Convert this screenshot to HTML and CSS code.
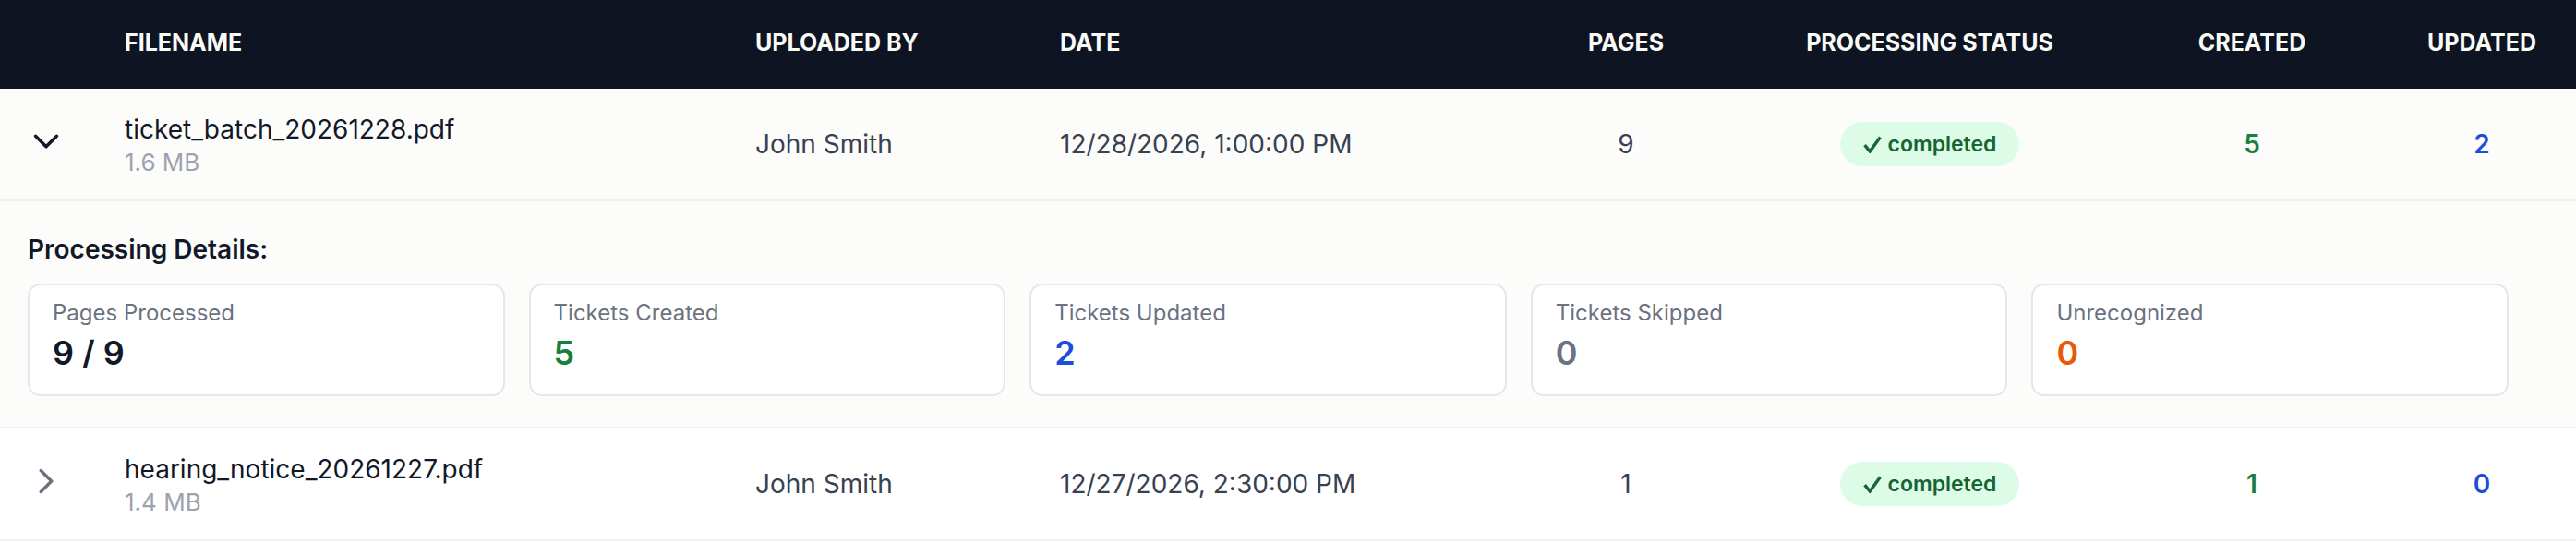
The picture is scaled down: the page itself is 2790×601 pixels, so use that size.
FILE: index.html
```html
<!DOCTYPE html>
<html lang="en">
<head>
<meta charset="utf-8">
<title>Uploads</title>
<link rel="stylesheet" href="styles.css">
</head>
<body>
<div class="table">
  <div class="row head">
    <div class="cell"></div>
    <div class="cell left">Filename</div>
    <div class="cell left">Uploaded By</div>
    <div class="cell left">Date</div>
    <div class="cell center">Pages</div>
    <div class="cell center">Processing Status</div>
    <div class="cell center">Created</div>
    <div class="cell center">Updated</div>
  </div>

  <div class="row body expanded">
    <div class="cell toggle">
      <svg class="chev dark" viewBox="0 0 24 24" width="46" height="46"><path d="m6 9 6 6 6-6"/></svg>
    </div>
    <div class="cell file">
      <div class="fname">ticket_batch_20261228.pdf</div>
      <div class="fsize">1.6 MB</div>
    </div>
    <div class="cell left muted">John Smith</div>
    <div class="cell left muted">12/28/2026, 1:00:00 PM</div>
    <div class="cell center muted">9</div>
    <div class="cell center"><span class="badge"><svg class="check" viewBox="0 0 20 19" width="20" height="19"><path d="M1.6 10.2 L7.2 17 L18.4 1.6"/></svg>completed</span></div>
    <div class="cell center num green">5</div>
    <div class="cell center num blue">2</div>
  </div>

  <div class="details">
    <div class="details-title">Processing Details:</div>
    <div class="cards">
      <div class="card"><div class="label">Pages Processed</div><div class="value">9 / 9</div></div>
      <div class="card"><div class="label">Tickets Created</div><div class="value green">5</div></div>
      <div class="card"><div class="label">Tickets Updated</div><div class="value blue">2</div></div>
      <div class="card"><div class="label">Tickets Skipped</div><div class="value gray">0</div></div>
      <div class="card"><div class="label">Unrecognized</div><div class="value orange">0</div></div>
    </div>
  </div>

  <div class="row body">
    <div class="cell toggle">
      <svg class="chev light" viewBox="0 0 24 24" width="46" height="46"><path d="m9 18 6-6-6-6"/></svg>
    </div>
    <div class="cell file">
      <div class="fname">hearing_notice_20261227.pdf</div>
      <div class="fsize">1.4 MB</div>
    </div>
    <div class="cell left muted">John Smith</div>
    <div class="cell left muted">12/27/2026, 2:30:00 PM</div>
    <div class="cell center muted">1</div>
    <div class="cell center"><span class="badge"><svg class="check" viewBox="0 0 20 19" width="20" height="19"><path d="M1.6 10.2 L7.2 17 L18.4 1.6"/></svg>completed</span></div>
    <div class="cell center num green">1</div>
    <div class="cell center num blue">0</div>
  </div>
</div>
</body>
</html>
```
FILE: styles.css
```css
html, body {
  margin: 0;
  padding: 0;
  background: #ffffff;
}
body {
  font-family: Inter, "Noto Sans", "Liberation Sans", sans-serif;
  color: #111827;
}
.table {
  width: 2790px;
}
.row {
  display: grid;
  grid-template-columns: 99px 683px 330px 508px 282px 376px 322px 176px;
}
.cell {
  display: flex;
  align-items: center;
  min-width: 0;
}
.cell.left {
  padding-left: 36px;
  justify-content: flex-start;
}
.cell.center {
  justify-content: center;
}
.head {
  height: 96px;
  background: #0e1422;
  color: #fafaf7;
  font-size: 25px;
  font-weight: 700;
  text-transform: uppercase;
}
.head .cell {
  padding-bottom: 5px;
}
.body {
  height: 120px;
  border-bottom: 2px solid #f0f0ef;
  background: #ffffff;
  font-size: 28px;
}
.body.expanded {
  background: #fcfcfa;
}
.cell.toggle {
  padding-left: 27px;
}
.chev {
  fill: none;
  stroke-width: 1.8;
  stroke-linecap: round;
  stroke-linejoin: round;
  margin-bottom: 7px;
}
.chev.dark { stroke: #111827; }
.chev.light { stroke: #6b7280; }
.cell.file {
  padding-left: 36px;
  flex-direction: column;
  align-items: flex-start;
  justify-content: center;
}
.fname {
  font-size: 28px;
  line-height: 40px;
  color: #111827;
}
.fsize {
  font-size: 26px;
  line-height: 32px;
  color: #9ca3af;
}
.muted {
  color: #374151;
}
.num {
  font-weight: 600;
}
.badge {
  display: inline-flex;
  align-items: center;
  height: 48px;
  padding: 0 25px;
  border-radius: 24px;
  background: #dcfce7;
  color: #166534;
  font-size: 23px;
  font-weight: 600;
  white-space: nowrap;
}
.check {
  fill: none;
  stroke: #166534;
  stroke-width: 3.4;
  stroke-linecap: butt;
  stroke-linejoin: miter;
  margin-right: 7px;
  margin-top: 1px;
}
.details {
  background: #fcfcfa;
  border-bottom: 2px solid #f0f0ef;
  padding: 34px 73px 33px 30px;
}
.details-title {
  font-size: 28px;
  line-height: 36px;
  font-weight: 600;
  color: #111827;
}
.cards {
  margin-top: 19px;
  display: grid;
  grid-template-columns: repeat(5, 1fr);
  gap: 26px;
}
.card {
  height: 122px;
  box-sizing: border-box;
  border: 2px solid #e5e7eb;
  border-radius: 14px;
  background: #ffffff;
  padding: 15px 25px 0 25px;
}
.label {
  font-size: 24px;
  line-height: 30px;
  color: #6b7280;
}
.value {
  margin-top: 7px;
  font-size: 36px;
  line-height: 42px;
  font-weight: 600;
  color: #111827;
}
.green { color: #15803d; }
.blue { color: #1d4ed8; }
.gray { color: #6b7280; }
.orange { color: #ea580c; }
.value.green { color: #15803d; }
.value.blue { color: #1d4ed8; }
.value.gray { color: #6b7280; }
.value.orange { color: #ea580c; }
```
